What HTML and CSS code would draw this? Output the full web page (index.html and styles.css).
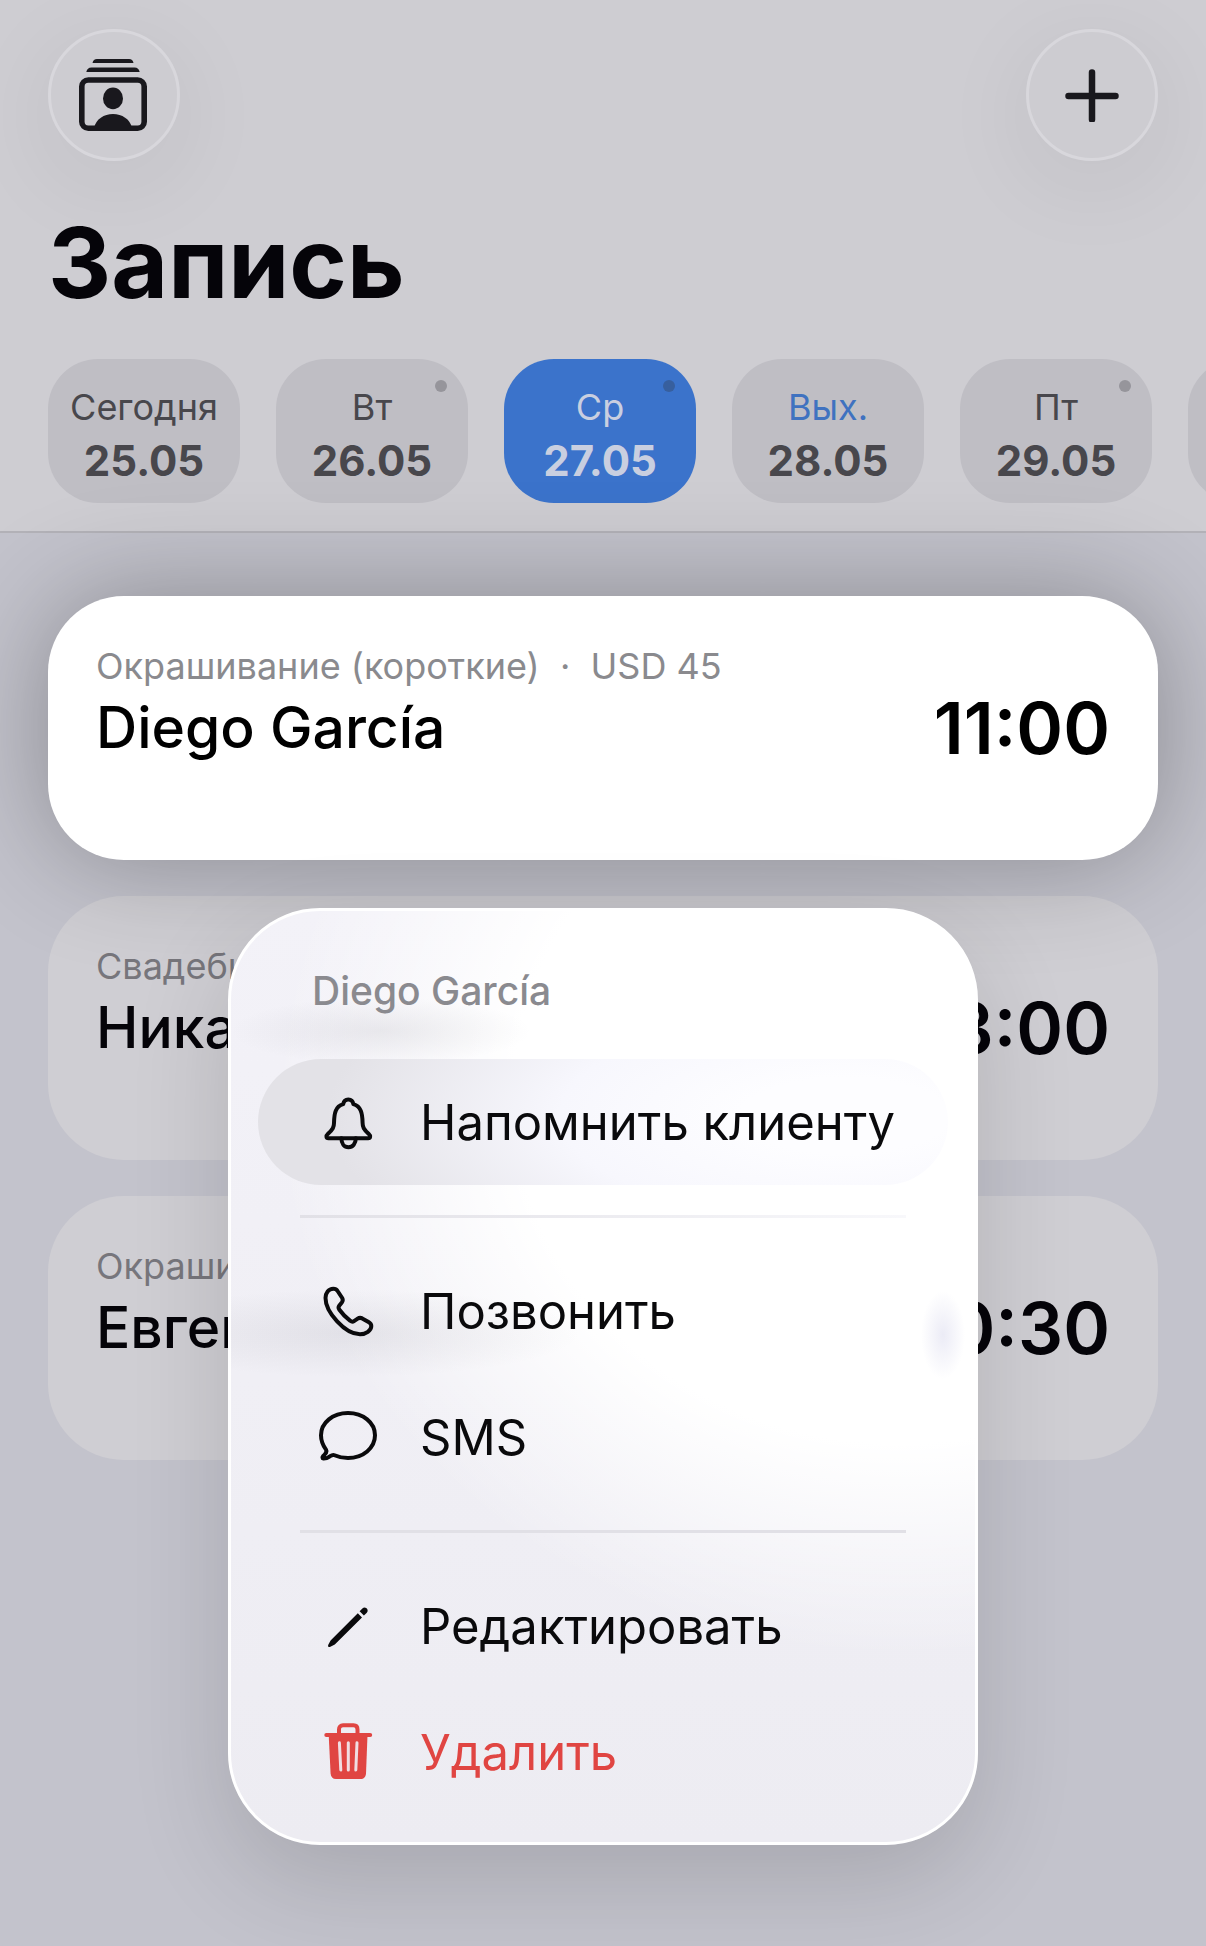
FILE: index.html
```html
<!DOCTYPE html>
<html lang="ru">
<head>
  <meta charset="UTF-8" />
  <meta name="viewport" content="width=device-width, initial-scale=1.0"/>
  <title>Запись</title>
  <link rel="stylesheet" href="styles.css">
</head>
<body>

  <header class="header">
    <div class="toolbar">
      <button class="round-btn" aria-label="Клиенты">
        <svg width="70" height="72" viewBox="0 0 70 72">
          <path d="M13.5 4 C14 1.5 15.5 0 18 0 H50 C52.5 0 54 1.5 54.5 4 Z M7.3 13 C8 10 9.5 8.5 12.5 8.5 H55.5 C58.5 8.5 60 10 60.7 13 Z"/>
          <rect x="2.8" y="21" width="62.4" height="48.2" rx="6.5" fill="none" stroke="currentColor" stroke-width="5.6"/>
          <ellipse cx="34" cy="39.4" rx="10" ry="10.8"/>
          <path d="M15 69 C17 60 25 55 34 55 C43 55 51 60 53 69 Z"/>
        </svg>
      </button>
      <button class="round-btn" aria-label="Добавить">
        <svg width="54" height="54" viewBox="0 0 54 54">
          <path d="M27 4.5 V51.5 M3.5 28 H50.5" fill="none" stroke="currentColor" stroke-width="6.5" stroke-linecap="round"/>
        </svg>
      </button>
    </div>

    <h1>Запись</h1>

    <nav class="days">
      <button class="day"><span>Сегодня</span><b>25.05</b></button>
      <button class="day busy"><span>Вт</span><b>26.05</b></button>
      <button class="day busy active"><span>Ср</span><b>27.05</b></button>
      <button class="day off"><span>Вых.</span><b>28.05</b></button>
      <button class="day busy"><span>Пт</span><b>29.05</b></button>
      <button class="day" aria-label="Следующий день"></button>
    </nav>
  </header>

  <main class="list">
    <article class="card selected">
      <div class="info">
        <p class="service">Окрашивание (короткие) &nbsp;·&nbsp; USD 45</p>
        <h2>Diego García</h2>
      </div>
      <time>11:00</time>

      <!-- Context menu -->
      <div class="menu">
        <p class="menu-title">Diego García</p>
        <button class="menu-item current">
          <svg class="line" width="60" height="60" viewBox="0 0 60 60">
            <path d="M10.5 46.3 C8 46.3 7.8 43.8 9.8 42 C15 37.2 16 35 16 31 C16.2 21 17.5 14.5 25.2 12.2 C25.6 9.5 27.2 7.4 30.3 7.4 C33.4 7.4 35 9.5 35.4 12.2 C43 14.5 44.4 21 44.6 31 C44.6 35 45.6 37.2 50.8 42 C52.8 43.8 52.6 46.3 50.1 46.3 Z"/>
            <path d="M23.4 46.3 C23.4 51.5 26.2 55.3 30.5 55.3 C34.8 55.3 37.8 51.5 37.8 46.3"/>
          </svg>
          Напомнить клиенту
        </button>
        <hr>
        <button class="menu-item">
          <svg class="line" width="60" height="60" viewBox="0 0 60 60">
            <path d="M15.3 7.7 C10.5 7.7 7.5 12 7.5 17 C7.5 31 27 53.3 42 53.3 C48 53.3 53.3 49.5 53.3 45 C53.3 43 52.2 42 50.5 41 L44.2 37.4 C42.6 36.6 41 36.8 39.7 37.7 L36 40.2 C34.8 41 33.5 40.8 32.3 39.8 C28 36.5 24 32.5 21.2 28.5 C20.4 27.3 20.3 26 21.2 24.8 L24 21.2 C25 19.8 25 18.5 24.2 17 L19.6 10 C18.6 8.4 17.2 7.7 15.3 7.7 Z"/>
          </svg>
          Позвонить
        </button>
        <button class="menu-item">
          <svg class="line" width="60" height="60" viewBox="0 0 60 60">
            <path d="M30 6 C45 6 57 15.5 57 28.3 C57 41 45 51 30 51 C25 51 20.5 50 16.5 48.2 C14.5 47.3 13.2 48.5 11.5 49.6 C9.5 51 7 51.6 5.3 51.5 C4.2 51.4 4.3 50 5 49.2 C7.8 46.4 9.4 44.8 8 42.6 C5 38.6 3 34.2 3 28.3 C3 15.5 15 6 30 6 Z"/>
          </svg>
          SMS
        </button>
        <hr>
        <button class="menu-item">
          <svg width="60" height="60" viewBox="0 0 60 60">
            <path d="M10.4 50.8 C9.9 50.3 10 49.6 10.4 48.6 L12.6 44.4 L39.8 17.2 L44 21.4 L16.8 48.6 L12.4 50.7 C11.4 51.1 10.8 51.2 10.4 50.8 Z"/>
            <path d="M41.6 15.3 L44.4 12.4 C47.4 9.8 51.4 13.8 48.8 16.8 L45.9 19.6 Z"/>
          </svg>
          Редактировать
        </button>
        <button class="menu-item danger">
          <svg width="60" height="60" viewBox="0 0 60 60">
            <path d="M21 13 V7.5 C21 4.8 22.6 3.3 25 3.3 H35.5 C37.9 3.3 39.5 4.8 39.5 7.5 V13 M8.3 13 H52.2" fill="none" stroke="currentColor" stroke-width="4" stroke-linecap="round"/>
            <path d="M10.7 13 H49.5 L48 51.5 C47.8 55 45.8 57 42.5 57 H18 C14.7 57 12.8 55 12.6 51.5 Z"/>
            <path class="slots" d="M21.4 20.8 L22.8 48 M30.3 20.8 V48 M39 20.8 L37.8 48"/>
          </svg>
          Удалить
        </button>
      </div>
    </article>

    <article class="card">
      <div class="info">
        <p class="service">Свадебная</p>
        <h2>Ника</h2>
      </div>
      <time>13:00</time>
    </article>

    <article class="card">
      <div class="info">
        <p class="service">Окрашивание</p>
        <h2>Евгения</h2>
      </div>
      <time>20:30</time>
    </article>
  </main>

</body>
</html>
```

FILE: styles.css
```css
* {
  box-sizing: border-box;
}
body {
  margin: 0;
  min-height: 100vh;
  background: #c3c3cc;
  font-family: Inter, "Liberation Sans", sans-serif;
  color: #050409;
  overflow-x: hidden;
}
button {
  border: none;
  background: none;
  padding: 0;
  font: inherit;
  color: inherit;
  cursor: pointer;
}
svg {
  display: block;
  flex: none;
  fill: currentColor;
}
h1, h2, p {
  margin: 0;
}

/* Header */
.header {
  background: #cecdd2;
  border-bottom: 2px solid #b3b2b8;
  padding: 29px 48px 28px;
  overflow: hidden;
}
.toolbar {
  display: flex;
  justify-content: space-between;
}
.round-btn {
  width: 132px;
  height: 132px;
  border-radius: 50%;
  border: 3px solid #d8d7dc;
  background: #cdccd1;
  color: #19181d;
  display: flex;
  align-items: center;
  justify-content: center;
  box-shadow: 0 20px 100px rgba(0, 0, 0, 0.07);
}
h1 {
  margin: 42px 0 36px;
  font-size: 98px;
  line-height: 120px;
  font-weight: 700;
}
.days {
  display: flex;
  gap: 36px;
  margin-right: -48px;
  overflow: hidden;
}
.day {
  position: relative;
  flex: none;
  width: 192px;
  height: 144px;
  padding-top: 6px;
  border-radius: 50px;
  background: #bfbec4;
  color: #48474c;
  display: flex;
  flex-direction: column;
  align-items: center;
  justify-content: center;
  line-height: 54px;
  font-size: 36px;
}
.day b {
  font-size: 42px;
  font-weight: 700;
}
.day.off span {
  color: #3f72c0;
}
.day.active {
  background: #3b73cb;
  color: #c9cfe0;
}
.busy::after {
  content: "";
  position: absolute;
  top: 21px;
  right: 21px;
  width: 12px;
  height: 12px;
  border-radius: 50%;
  background: #96959b;
}
.busy.active::after {
  background: #375f9e;
}

/* Appointments */
.list {
  display: flex;
  flex-direction: column;
  gap: 36px;
  padding: 63px 48px;
}
.card {
  display: flex;
  align-items: flex-start;
  justify-content: space-between;
  min-height: 264px;
  padding: 48px;
  border-radius: 76px;
  background: #cfced3;
}
.card.selected {
  position: relative;
  z-index: 1;
  background: #fff;
  color: #000;
  box-shadow: 0 0 110px rgba(0, 0, 0, 0.3);
}
.service {
  font-size: 36px;
  line-height: 44px;
  color: #77767c;
}
.selected .service {
  color: #8a8a8e;
}
h2 {
  font-size: 57px;
  line-height: 80px;
  font-weight: 500;
}
time {
  margin-top: 44px;
  font-size: 71px;
  line-height: 80px;
  font-weight: 600;
}

/* Context menu */
.menu {
  position: absolute;
  top: calc(100% + 48px);
  left: 50%;
  transform: translateX(-50%);
  width: 750px;
  max-width: 100%;
  padding: 27px;
  border: 3px solid #fff;
  border-radius: 92px;
  background:
    radial-gradient(ellipse 150px 34px at 150px 120px, rgba(120, 120, 130, 0.12), transparent),
    radial-gradient(ellipse 230px 44px at 120px 422px, rgba(120, 120, 130, 0.12), transparent),
    radial-gradient(ellipse 22px 44px at 712px 424px, rgba(190, 190, 225, 0.3), transparent),
    radial-gradient(ellipse 84% 60% at 90% 20%, #fff 62%, rgba(255, 255, 255, 0) 100%),
    linear-gradient(#f3f2f8, #edecf2);
  box-shadow: 0 36px 100px rgba(0, 0, 0, 0.14);
  color: #0a0a0c;
}
.menu-title {
  padding: 29px 54px 44px;
  font-size: 39px;
  line-height: 48px;
  font-weight: 500;
  color: #8a8a8f;
}
.menu-item {
  display: flex;
  align-items: center;
  gap: 42px;
  width: 100%;
  height: 126px;
  padding: 0 60px;
  border-radius: 63px;
  font-size: 49px;
  white-space: nowrap;
}
.menu-item.current {
  background: radial-gradient(ellipse 75% 150% at 85% 45%, #fdfdff 20%, #f7f7fd 55%, #e3e2e7 100%);
}
.menu hr {
  height: 3px;
  margin: 30px 42px;
  border: none;
  background: #e1e0e6;
}
.menu-item.current + hr {
  background: linear-gradient(to right, #e1e0e6, #f8f8fb);
}
.danger {
  color: #e04542;
}
.line {
  fill: none;
  stroke: currentColor;
  stroke-width: 4;
  stroke-linejoin: round;
  stroke-linecap: round;
}
.slots {
  fill: none;
  stroke: #f0dde2;
  stroke-width: 3;
  stroke-linecap: round;
}
```
